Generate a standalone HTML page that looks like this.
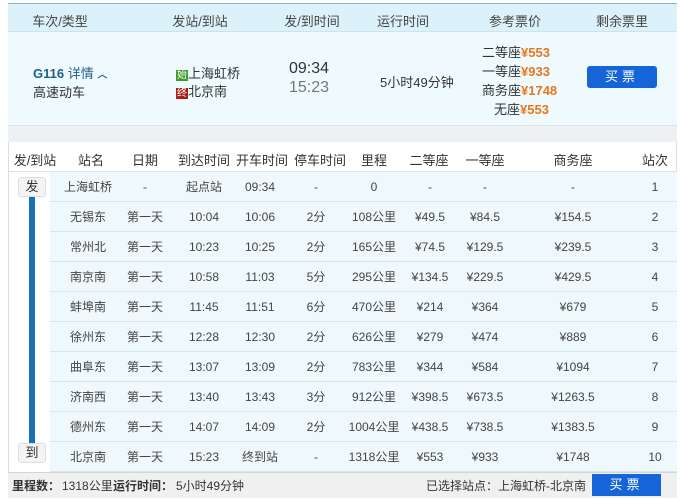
<!DOCTYPE html>
<html><head><meta charset="utf-8"><style>
*{margin:0;padding:0;box-sizing:border-box}
body{width:681px;height:502px;background:#fff;font-family:"Liberation Sans","Noto Sans CJK SC",sans-serif;font-size:13px;color:#333;position:relative;overflow:hidden}
.a{position:absolute;white-space:nowrap}
.c{position:absolute;transform:translateX(-50%);white-space:nowrap}
.t{position:absolute;transform:translateX(-50%);white-space:nowrap;font-size:12px;line-height:30px;height:30px;color:#444}
.row{position:absolute;left:50px;width:627px;height:30px;background:#eff9fc;border-bottom:1px solid #d6e6ec}
.p{color:#e8761c;font-weight:bold}
</style></head><body>
<div class="a" style="left:8px;top:3px;width:669px;height:29px;background:#dcf2fa;border-top:1px solid #7fb5c4;border-bottom:1px solid #cfe3ea"></div>
<div class="a" style="left:8px;top:32px;width:669px;height:93px;background:#eefafd"></div>
<div class="a" style="left:8px;top:125px;width:669px;height:17px;background:#eef1f3;border-top:1px solid #dde3e6"></div>
<div class="a" style="left:8px;top:142px;width:669px;height:356px;border-left:1px solid #d8dde0;border-right:1px solid #d8dde0"></div>
<div class="a" style="left:8px;top:171px;width:669px;height:1px;background:#d6e6ec"></div>
<div class="c" style="left:60px;top:11px;color:#444">车次/类型</div>
<div class="c" style="left:200px;top:11px;color:#444">发站/到站</div>
<div class="c" style="left:312px;top:11px;color:#444">发/到时间</div>
<div class="c" style="left:403px;top:11px;color:#444">运行时间</div>
<div class="c" style="left:515px;top:11px;color:#444">参考票价</div>
<div class="c" style="left:622px;top:11px;color:#444">剩余票里</div>
<div class="a" style="left:33px;top:63px;color:#1f5f8a;font-weight:bold">G116 <span style="font-weight:normal">详情</span> <span style="font-size:10px">︿</span></div>
<div class="a" style="left:33px;top:82px">高速动车</div>
<div class="a" style="left:176px;top:63px"><span style="background:#3f9a28;color:#fff;font-size:10px;padding:0 1px">始</span>上海虹桥</div>
<div class="a" style="left:176px;top:81px"><span style="background:#a8201a;color:#fff;font-size:10px;padding:0 1px">终</span>北京南</div>
<div class="a" style="left:289px;top:60px;font-size:16px;color:#333">09:34</div>
<div class="a" style="left:289px;top:79px;font-size:16px;color:#777">15:23</div>
<div class="a" style="left:380px;top:72px">5小时49分钟</div>
<div class="a" style="left:482px;top:43px;line-height:19px">二等座<span class="p">¥553</span></div>
<div class="a" style="left:482px;top:62px;line-height:19px">一等座<span class="p">¥933</span></div>
<div class="a" style="left:482px;top:81px;line-height:19px">商务座<span class="p">¥1748</span></div>
<div class="a" style="left:494px;top:100px;line-height:19px">无座<span class="p">¥553</span></div>
<div class="a" style="left:587px;top:66px;width:70px;height:22px;background:#1565d8;border-radius:3px;color:#fff;text-align:center;line-height:22px;letter-spacing:4px">买票</div>
<div class="c" style="left:35px;top:150px">发/到站</div><div class="c" style="left:91px;top:150px">站名</div><div class="c" style="left:145px;top:150px">日期</div><div class="c" style="left:204px;top:150px">到达时间</div><div class="c" style="left:262px;top:150px">开车时间</div><div class="c" style="left:320px;top:150px">停车时间</div><div class="c" style="left:374px;top:150px">里程</div><div class="c" style="left:429px;top:150px">二等座</div><div class="c" style="left:485px;top:150px">一等座</div><div class="c" style="left:573px;top:150px">商务座</div><div class="c" style="left:655px;top:150px">站次</div>
<div id="rows"></div>
<div class="a" style="left:29px;top:192px;width:6px;height:258px;background:#1a6fb8"></div>
<div class="a" style="left:18px;top:177px;width:28px;height:20px;background:#f4f4f4;border:1px solid #ddd;border-radius:3px;text-align:center;line-height:18px">发</div>
<div class="a" style="left:18px;top:443px;width:28px;height:20px;background:#f4f4f4;border:1px solid #ddd;border-radius:3px;text-align:center;line-height:18px">到</div>
<div class="a" style="left:8px;top:472px;width:669px;height:26px;background:#f0f0f0;border-top:1px solid #d0d6da"></div>
<div class="a" style="left:12px;top:477px;font-size:12px"><b>里程数：</b></div>
<div class="a" style="left:62px;top:477px;font-size:12px">1318公里</div>
<div class="a" style="left:113px;top:477px;font-size:12px"><b>运行时间：</b></div>
<div class="a" style="left:176px;top:477px;font-size:12px">5小时49分钟</div>
<div class="a" style="left:426px;top:477px;font-size:12px">已选择站点：上海虹桥-北京南</div>
<div class="a" style="left:592px;top:474px;width:69px;height:22px;background:#1565d8;color:#fff;text-align:center;line-height:22px;letter-spacing:4px">买票</div>
<script>
var d=[["上海虹桥","-","起点站","09:34","-","0","-","-","-","1"],["无锡东","第一天","10:04","10:06","2分","108公里","¥49.5","¥84.5","¥154.5","2"],["常州北","第一天","10:23","10:25","2分","165公里","¥74.5","¥129.5","¥239.5","3"],["南京南","第一天","10:58","11:03","5分","295公里","¥134.5","¥229.5","¥429.5","4"],["蚌埠南","第一天","11:45","11:51","6分","470公里","¥214","¥364","¥679","5"],["徐州东","第一天","12:28","12:30","2分","626公里","¥279","¥474","¥889","6"],["曲阜东","第一天","13:07","13:09","2分","783公里","¥344","¥584","¥1094","7"],["济南西","第一天","13:40","13:43","3分","912公里","¥398.5","¥673.5","¥1263.5","8"],["德州东","第一天","14:07","14:09","2分","1004公里","¥438.5","¥738.5","¥1383.5","9"],["北京南","第一天","15:23","终到站","-","1318公里","¥553","¥933","¥1748","10"]];
var x=[88,145,204,260,316,374,430,485,573,655],h="";
d.forEach(function(r,i){var t=172+i*30;h+='<div class="row" style="top:'+t+'px"></div>';r.forEach(function(v,j){h+='<div class="t" style="left:'+x[j]+'px;top:'+t+'px">'+v+'</div>'})});
document.getElementById("rows").innerHTML=h;
</script>
</body></html>
